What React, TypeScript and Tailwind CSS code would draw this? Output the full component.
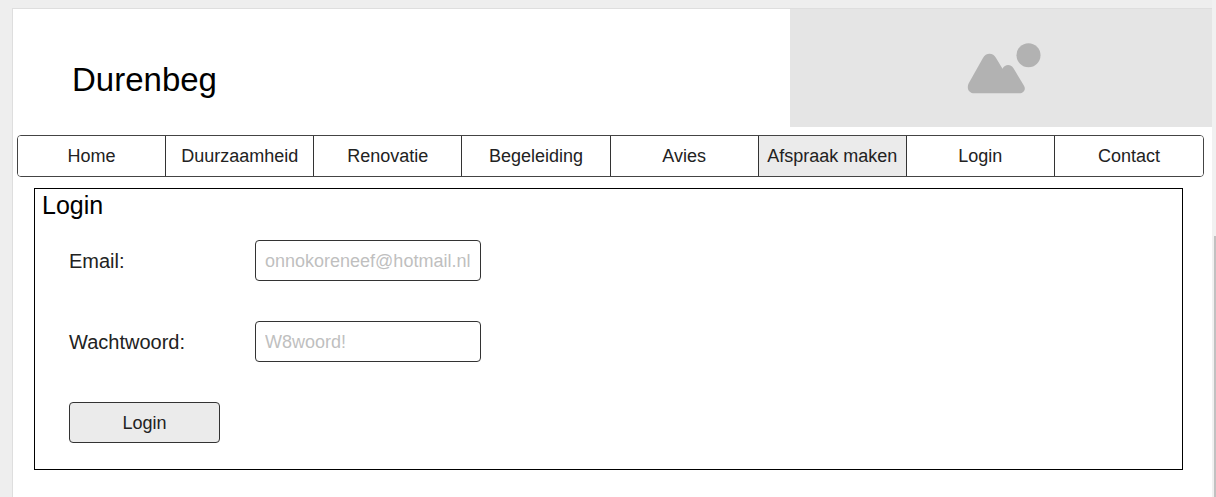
const navItems = [
  { label: "Home" },
  { label: "Duurzaamheid" },
  { label: "Renovatie" },
  { label: "Begeleiding" },
  { label: "Avies" },
  { label: "Afspraak maken", active: true },
  { label: "Login" },
  { label: "Contact" },
];

function ImagePlaceholder() {
  return (
    <div className="flex w-[35.2%] items-center justify-center bg-[#e5e5e5]">
      <svg width="80" height="54" viewBox="0 -2 80 54" fill="#b2b2b2" aria-hidden="true">
        <circle cx="67.5" cy="12.3" r="12" />
        <path d="M21.8 15.2C25 9.3 32 9.3 35.2 15.2L41.5 25.7C44 21 49.5 20.8 52.5 25.2L63 42.8C65.3 46.5 62.5 50.3 58.5 50.3H13.5C8 50.3 5.3 45.8 7.6 40.6Z" />
      </svg>
    </div>
  );
}

type FieldProps = { id: string; label: string; type: string; placeholder: string };

function Field({ id, label, type, placeholder }: FieldProps) {
  return (
    <div className="flex items-center">
      <label htmlFor={id} className="w-[186px] text-xl leading-6 text-[#222]">
        {label}
      </label>
      <input
        id={id}
        type={type}
        placeholder={placeholder}
        className="h-[41px] w-[226px] rounded border border-[#333] bg-white px-[9px] pt-0.5 text-lg text-[#222] outline-none placeholder:text-[#bfbfbf]"
      />
    </div>
  );
}

export default function App() {
  return (
    <div className="flex min-h-screen bg-[#eee] font-['Liberation_Sans',Arial,sans-serif] text-black">
      <main className="mt-2 ml-3 flex-1 border-t border-l border-[#dedede] bg-white">
        <header className="flex h-[118px]">
          <div className="flex flex-1 items-center pt-6 pl-[59px]">
            <h1 className="text-[33px] leading-10">Durenbeg</h1>
          </div>
          <ImagePlaceholder />
        </header>

        <nav className="mt-2 mr-2 ml-1">
          <ul className="grid grid-cols-8 divide-x divide-[#333] overflow-hidden rounded border border-[#444]">
            {navItems.map((item) => (
              <li key={item.label}>
                <a
                  href="#"
                  className={
                    item.active
                      ? "flex h-10 items-center justify-center bg-[#ebebeb] text-lg whitespace-nowrap text-[#222]"
                      : "flex h-10 items-center justify-center bg-white text-lg whitespace-nowrap text-[#222]"
                  }
                >
                  {item.label}
                </a>
              </li>
            ))}
          </ul>
        </nav>

        <section className="mt-[11px] mr-[29px] ml-[21px] border border-black pb-[26px]">
          <h2 className="pl-[7px] text-[25px] leading-8">Login</h2>
          <form className="mt-[19px] flex flex-col gap-10 pl-[34px]">
            <Field id="email" label="Email:" type="email" placeholder="onnokoreneef@hotmail.nl" />
            <Field id="password" label="Wachtwoord:" type="password" placeholder="W8woord!" />
            <button
              type="button"
              className="h-[41px] w-[151px] rounded border border-[#333] bg-[#ebebeb] text-lg text-[#222]"
            >
              Login
            </button>
          </form>
        </section>
      </main>
      <div className="flex w-1 flex-col items-end bg-[#f1f1f1] pt-[236px]" aria-hidden="true">
        <div className="w-0.5 flex-1 bg-[#c1c1c1]" />
      </div>
    </div>
  );
}
